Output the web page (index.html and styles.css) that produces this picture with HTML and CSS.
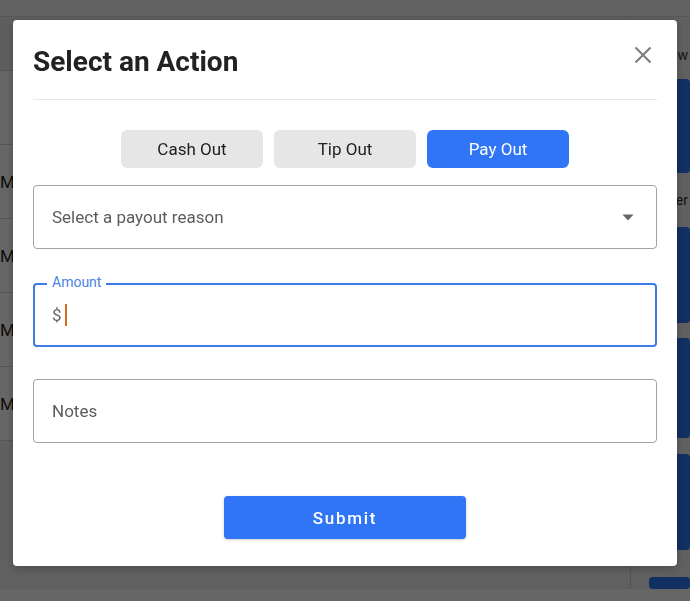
FILE: index.html
```html
<!DOCTYPE html>
<html lang="en">
<head>
    <meta charset="UTF-8">
    <meta name="viewport" content="width=device-width, initial-scale=1.0">
    <title>Select an Action</title>
    <link rel="stylesheet" href="styles.css">
</head>
<body>
    <div class="page">
        <div class="topbar"></div>
        <div class="content">
            <div class="list">
                <div class="row row-head"></div>
                <div class="row"></div>
                <div class="row">Mike</div>
                <div class="row">Mark</div>
                <div class="row">Maya</div>
                <div class="row">Mona</div>
            </div>
            <div class="side">
                <div class="side-label side-label-1">Now</div>
                <div class="side-btn side-btn-1"></div>
                <div class="side-label side-label-2">Tender</div>
                <div class="side-btn side-btn-2"></div>
                <div class="side-btn side-btn-3"></div>
                <div class="side-btn side-btn-4"></div>
                <div class="side-btn side-btn-5"></div>
            </div>
        </div>
        <div class="footer"></div>
    </div>

    <div class="overlay">
        <div class="modal">
            <div class="modal-header">
                <h1>Select an Action</h1>
                <button class="close-btn" aria-label="Close">
                    <svg width="18" height="18" viewBox="0 0 18 18">
                        <path d="M1.5 1.5 L16.5 16.5 M16.5 1.5 L1.5 16.5" stroke="#7b7b7b" stroke-width="2" fill="none"/>
                    </svg>
                </button>
            </div>

            <div class="tabs">
                <button class="tab">Cash Out</button>
                <button class="tab">Tip Out</button>
                <button class="tab tab-active">Pay Out</button>
            </div>

            <div class="field field-select">
                <span class="placeholder">Select a payout reason</span>
                <svg class="arrow" width="12" height="7" viewBox="0 0 12 7">
                    <path d="M0.5 0.5 L11.5 0.5 L6 6.5 Z" fill="#666"/>
                </svg>
            </div>

            <div class="field field-active">
                <span class="field-label">Amount</span>
                <span class="prefix">$</span><span class="caret"></span>
            </div>

            <div class="field field-notes">
                <span class="placeholder">Notes</span>
            </div>

            <div class="actions">
                <button class="submit">Submit</button>
            </div>
        </div>
    </div>
</body>
</html>
```

FILE: styles.css
```css
body {
    font-family: Roboto, "Liberation Sans", sans-serif;
    margin: 0;
    padding: 0;
    background-color: #fff;
    overflow: hidden;
}
.page {
    height: 601px;
    display: flex;
    flex-direction: column;
}
.topbar {
    height: 16px;
    background: #f4f4f4;
    border-bottom: 1px solid #d8d8d8;
}
.content {
    flex: 1;
    display: flex;
}
.list {
    flex: 1;
    background: #f0f0f0;
}
.row {
    height: 73px;
    border-bottom: 1px solid #d6d6d6;
    background: #fff;
    font-size: 17px;
    color: #222;
    display: flex;
    align-items: center;
}
.row-head {
    height: 53px;
    background: #ececec;
}
.side {
    width: 60px;
    box-sizing: border-box;
    border-left: 1px solid #d0d0d0;
    padding: 0 2px 0 18px;
    display: flex;
    flex-direction: column;
    background: #f0f0f0;
}
.side-label {
    height: 20px;
    line-height: 20px;
    font-size: 14px;
    color: #333;
    margin-left: -16px;
    text-align: right;
    white-space: nowrap;
}
.side-label-1 { margin-top: 28px; }
.side-label-2 { margin-top: 17px; }
.side-btn {
    background: #2f75f5;
    border-radius: 4px;
    margin-right: -2px;
}
.side-btn-1 { height: 94px; margin-top: 14px; }
.side-btn-2 { height: 96px; margin-top: 17px; }
.side-btn-3 { height: 100px; margin-top: 15px; }
.side-btn-4 { height: 96px; margin-top: 16px; }
.side-btn-5 { flex: 1; margin-top: 27px; }
.footer {
    height: 12px;
    background: #fff;
}

.overlay {
    position: fixed;
    inset: 0;
    background: rgba(0, 0, 0, 0.6);
    display: flex;
    justify-content: center;
    align-items: flex-start;
    padding-top: 20px;
}
.modal {
    width: 664px;
    height: 546px;
    box-sizing: border-box;
    background: #fff;
    border-radius: 4px;
    padding: 0 20px;
    box-shadow: 0 2px 8px rgba(0, 0, 0, 0.25);
    display: flex;
    flex-direction: column;
}
.modal-header {
    display: flex;
    justify-content: space-between;
    align-items: flex-start;
    padding: 25px 0 20px;
    border-bottom: 1px solid #e6e6e6;
}
.modal-header h1 {
    margin: 0;
    font-size: 28px;
    line-height: 34px;
    font-weight: 700;
    color: #222;
}
.close-btn {
    background: none;
    border: none;
    padding: 0;
    margin: 1px 5px 0 0;
    width: 18px;
    height: 18px;
    display: flex;
}
.tabs {
    display: flex;
    justify-content: center;
    gap: 11px;
    margin-top: 30px;
}
.tab {
    width: 142px;
    height: 38px;
    border: none;
    border-radius: 6px;
    background: #e6e6e6;
    font-family: inherit;
    font-size: 17px;
    color: #1e1e1e;
}
.tab-active {
    background: #2f75f5;
    color: #fff;
}
.field {
    position: relative;
    height: 64px;
    box-sizing: border-box;
    border: 1px solid #a2a2a2;
    border-radius: 4px;
    padding-left: 18px;
    display: flex;
    align-items: center;
    font-size: 17px;
}
.field-select {
    margin-top: 17px;
    padding-right: 22px;
    justify-content: space-between;
}
.placeholder {
    color: #5c5c5c;
}
.field-active {
    margin-top: 34px;
    border: 2px solid #3d7ce6;
    padding-left: 17px;
}
.field-label {
    position: absolute;
    top: -11px;
    left: 12px;
    padding: 0 5px;
    background: #fff;
    font-size: 14px;
    line-height: 16px;
    color: #4a84e2;
}
.prefix {
    color: #666;
}
.caret {
    display: inline-block;
    width: 2px;
    height: 22px;
    margin-left: 3px;
    background: #d9691f;
}
.field-notes {
    margin-top: 32px;
}
.actions {
    display: flex;
    justify-content: center;
    margin-top: 53px;
}
.submit {
    width: 242px;
    height: 43px;
    border: none;
    border-radius: 4px;
    background: #2f75f5;
    color: #fff;
    font-family: inherit;
    font-size: 17px;
    font-weight: 500;
    letter-spacing: 1.7px;
    box-shadow: 0 1px 3px rgba(0, 0, 0, 0.2);
}
```
